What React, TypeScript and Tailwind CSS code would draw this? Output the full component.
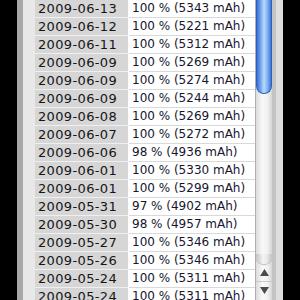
import React from "react";

type Row = { date: string; value: string };

const rows: Row[] = [
  { date: "2009-06-13", value: "100 % (5343 mAh)" },
  { date: "2009-06-12", value: "100 % (5221 mAh)" },
  { date: "2009-06-11", value: "100 % (5312 mAh)" },
  { date: "2009-06-09", value: "100 % (5269 mAh)" },
  { date: "2009-06-09", value: "100 % (5274 mAh)" },
  { date: "2009-06-09", value: "100 % (5244 mAh)" },
  { date: "2009-06-08", value: "100 % (5269 mAh)" },
  { date: "2009-06-07", value: "100 % (5272 mAh)" },
  { date: "2009-06-06", value: "98 % (4936 mAh)" },
  { date: "2009-06-01", value: "100 % (5330 mAh)" },
  { date: "2009-06-01", value: "100 % (5299 mAh)" },
  { date: "2009-05-31", value: "97 % (4902 mAh)" },
  { date: "2009-05-30", value: "98 % (4957 mAh)" },
  { date: "2009-05-27", value: "100 % (5346 mAh)" },
  { date: "2009-05-26", value: "100 % (5346 mAh)" },
  { date: "2009-05-24", value: "100 % (5311 mAh)" },
  { date: "2009-05-24", value: "100 % (5311 mAh)" },
];

const Scrollbar: React.FC = () => (
  <div className="flex flex-col w-[16px] h-full bg-[linear-gradient(to_right,#dcdcdc,#f8f8f8_40%,#f2f2f2_70%,#d6d6d6)]">
    {/* thumb */}
    <div className="h-[94px] w-full rounded-b-[8px] border-x border-b border-[#2f5fb8] bg-[linear-gradient(to_right,#3a6fd8,#6fa3ee_25%,#b9daf9_50%,#7fb1f0_75%,#3e74da)]" />
    <div className="flex-1" />
    {/* track end cap */}
    <div className="h-[10px] w-full rounded-b-[8px] bg-[linear-gradient(to_right,#c4c4c4,#f4f4f4_45%,#e8e8e8_70%,#c0c0c0)] shadow-[0_1px_1px_rgba(0,0,0,0.25)]" />
    <div className="h-[18px] flex items-center justify-center border-b border-[#c8c8c8]">
      <svg width="9" height="7" viewBox="0 0 9 7">
        <path d="M4.5 0 L9 7 L0 7 Z" fill="#4a4a4a" />
      </svg>
    </div>
    <div className="h-[18px] flex items-start pt-[5px] justify-center">
      <svg width="9" height="7" viewBox="0 0 9 7">
        <path d="M0 0 L9 0 L4.5 7 Z" fill="#4a4a4a" />
      </svg>
    </div>
  </div>
);

const App: React.FC = () => {
  return (
    <div
      className="flex w-[300px] h-[300px] overflow-hidden bg-black"
      style={{ fontFamily: '"DejaVu Sans", "Liberation Sans", sans-serif' }}
    >
      <div className="w-[17px] shrink-0 bg-black" />
      <div className="w-[6px] shrink-0 bg-[#a8a8a8]" />
      <div className="w-[12px] shrink-0 bg-[#e8e8e8]" />
      <div className="flex flex-col w-[220px] shrink-0 bg-white">
        {rows.map((row, i) => (
          <div key={i} className="flex h-[18px] shrink-0">
            <div className="w-[93px] shrink-0 bg-[#d6d6d6] border-b border-[#efefef] pl-[3px] text-[13px] leading-[17px] tracking-[0.35px] text-[#151515]">
              {row.date}
            </div>
            <div className="w-[1px] shrink-0 bg-white" />
            <div className="flex-1 border-b border-[#d9d9d9] pl-[3px] text-[12px] leading-[17px] text-[#161630]">
              {row.value}
            </div>
          </div>
        ))}
      </div>
      <div className="w-[1px] shrink-0 bg-[#b0b0b0]" />
      <div className="shrink-0 h-full">
        <Scrollbar />
      </div>
      <div className="w-[4px] shrink-0 bg-[#c4c4c4]" />
      <div className="w-[7px] shrink-0 bg-[#dedede]" />
      <div className="flex-1 bg-black" />
    </div>
  );
};

export default App;
